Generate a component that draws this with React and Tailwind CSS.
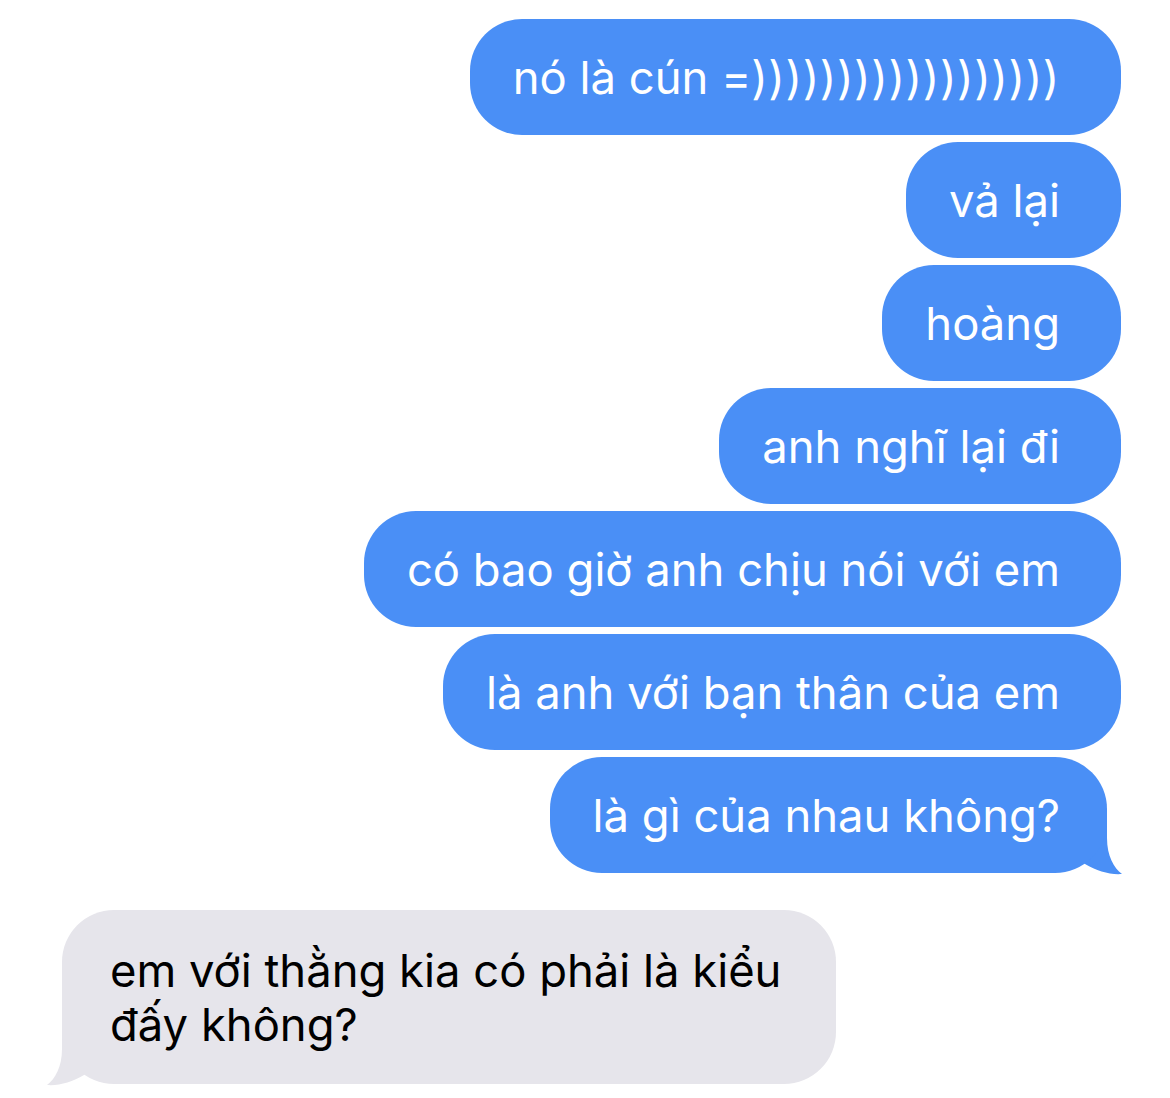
const sent = [
  "vả lại",
  "hoàng",
  "anh nghĩ lại đi",
  "có bao giờ anh chịu nói với em",
  "là anh với bạn thân của em",
];

function BlueBubble({ children }) {
  return (
    <div className="flex h-[116px] items-center rounded-[52px] bg-[#4a8ff6] pl-[43px] pr-[61px] pt-[2px] text-[45.4px] leading-[54px] text-white">
      {children}
    </div>
  );
}

function BlueTailBubble({ text }) {
  return (
    <div className="relative mr-[14px]">
      <div className="relative z-10 flex h-[116px] items-center rounded-[52px] bg-[#4a8ff6] pl-[43px] pr-[47px] pt-[2px] text-[45.4px] leading-[54px] text-white">
        {text}
      </div>
      <svg
        className="absolute right-[-18px] top-[61px]"
        width="70"
        height="60"
        viewBox="0 0 70 60"
      >
        <path
          d="M52 3 L52 20 C52 38 59 50 67 56 C55 57 42 53 30 46 L5 30 L25 3 Z"
          fill="#4a8ff6"
        />
      </svg>
    </div>
  );
}

function GrayTailBubble({ lines }) {
  return (
    <div className="relative ml-[62px] w-[774px]">
      <div className="relative z-10 rounded-[52px] bg-[#e6e5eb] pb-[32px] pl-[48px] pr-[30px] pt-[34px] text-[45.4px] leading-[54px] text-black">
        {lines[0]}
        <br />
        {lines[1]}
      </div>
      <svg
        className="absolute left-[-18px] top-[119px]"
        width="70"
        height="60"
        viewBox="0 0 70 60"
      >
        <path
          d="M18 3 L18 20 C18 38 11 50 3 56 C15 57 28 53 40 46 L65 30 L45 3 Z"
          fill="#e6e5eb"
        />
      </svg>
    </div>
  );
}

export default function App() {
  return (
    <div className="min-h-[1098px] w-full bg-white font-['Inter',sans-serif]">
      <div className="flex flex-col items-end gap-[7px] pr-[49px] pt-[19px]">
        <BlueBubble>
          nó là cún =<span className="tracking-[0.6px]">))))))))))))))))))</span>
        </BlueBubble>
        {sent.map((t) => (
          <BlueBubble key={t}>{t}</BlueBubble>
        ))}
        <BlueTailBubble text="là gì của nhau không?" />
      </div>
      <div className="mt-[37px]">
        <GrayTailBubble lines={["em với thằng kia có phải là kiểu", "đấy không?"]} />
      </div>
    </div>
  );
}
